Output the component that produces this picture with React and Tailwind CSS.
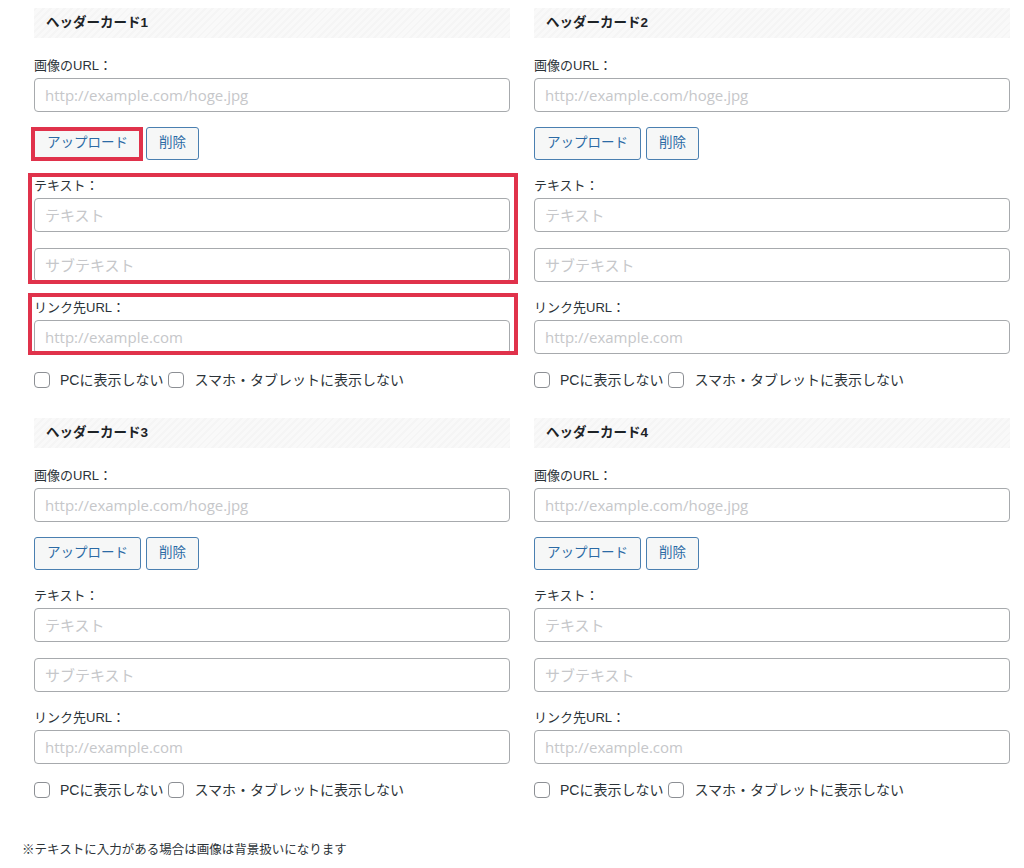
import React from "react";

const RED = "border-[#e0324b]";

function Field({ placeholder, className = "" }) {
  return (
    <input
      type="text"
      placeholder={placeholder}
      className={`block w-full h-[34px] rounded-[4px] border border-[#a7aaad] bg-white pl-[10px] font-['Open_Sans','Noto_Sans_CJK_JP',sans-serif] text-[15px] text-[#2c3338] placeholder:text-[#c6c7ca] outline-none ${className}`}
    />
  );
}

function Label({ children, className = "" }) {
  return (
    <div className={`h-[18px] leading-[18px] text-[13px] text-[#2c3338] ${className}`}>
      {children}
    </div>
  );
}

function Button({ children, marked }) {
  return (
    <button className="relative h-[33px] rounded-[3px] border border-[#4a7fb0] bg-[#f6f7f7] px-[12px] text-[13.5px] text-[#2b6aa5]">
      {children}
      {marked && (
        <span className={`pointer-events-none absolute -left-[4px] -right-[3px] -top-[1px] -bottom-[2px] border-4 ${RED}`} />
      )}
    </button>
  );
}

function Check({ label }) {
  return (
    <label className="flex h-4 items-center">
      <input
        type="checkbox"
        className="h-4 w-4 appearance-none rounded-[4px] border border-[#8c8f94] bg-white"
      />
      <span className="ml-[10px] mr-[5px] text-[14px] leading-[16px] text-[#2c3338]">{label}</span>
    </label>
  );
}

function HeaderCard({ n, marked }) {
  return (
    <div className="flex flex-col">
      <div className="flex h-[30px] items-center bg-[repeating-linear-gradient(-45deg,#f5f5f5_0px,#f5f5f5_2px,#f9f9f9_2px,#f9f9f9_5px)] pl-[12px] text-[13.5px] font-bold text-[#1d2327]">
        ヘッダーカード{n}
      </div>

      <Label className="mt-[19px]">画像のURL：</Label>
      <Field placeholder="http://example.com/hoge.jpg" className="mt-[3px]" />

      <div className="mt-[15px] flex gap-[5px]">
        <Button marked={marked}>アップロード</Button>
        <Button>削除</Button>
      </div>

      <div className="relative mt-[17px]">
        <Label>テキスト：</Label>
        <Field placeholder="テキスト" className="mt-[3px]" />
        <Field placeholder="サブテキスト" className="mt-[16px]" />
        {marked && (
          <span className={`pointer-events-none absolute -left-[6px] -right-[8px] -top-[4px] -bottom-[2px] border-4 ${RED}`} />
        )}
      </div>

      <div className="relative mt-[17px]">
        <Label>リンク先URL：</Label>
        <Field placeholder="http://example.com" className="mt-[3px]" />
        {marked && (
          <span className={`pointer-events-none absolute -left-[6px] -right-[8px] -top-[6px] -bottom-[1px] border-4 ${RED}`} />
        )}
      </div>

      <div className="mt-[18px] flex h-4 items-center">
        <Check label="PCに表示しない" />
        <Check label="スマホ・タブレットに表示しない" />
      </div>
    </div>
  );
}

export default function App() {
  return (
    <div className="min-h-screen bg-white pt-[8px] font-['Liberation_Sans','Noto_Sans_CJK_JP',sans-serif]">
      <div className="grid grid-cols-[476px_476px] gap-x-[24px] gap-y-[30px] pl-[34px]">
        <HeaderCard n={1} marked />
        <HeaderCard n={2} />
        <HeaderCard n={3} />
        <HeaderCard n={4} />
      </div>
      <p className="mt-[43px] pl-[22px] text-[12.5px] text-[#2c3338]">
        ※テキストに入力がある場合は画像は背景扱いになります
      </p>
    </div>
  );
}
